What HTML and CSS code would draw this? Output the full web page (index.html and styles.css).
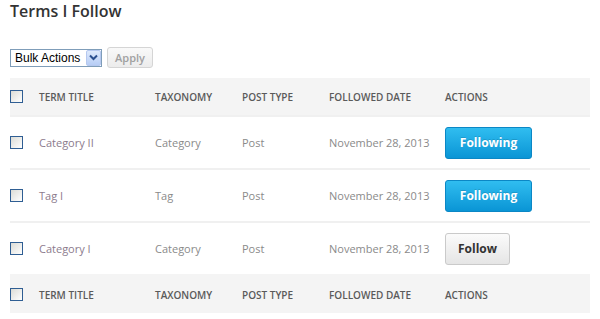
FILE: index.html
```html
<!DOCTYPE html>
<html lang="en">
<head>
    <meta charset="UTF-8">
    <meta name="viewport" content="width=device-width, initial-scale=1.0">
    <title>Terms I Follow</title>
    <link rel="stylesheet" href="styles.css">
</head>
<body>
    <div class="page">
        <h2 class="page-title">Terms I Follow</h2>
        <div class="toolbar">
            <div class="select-wrap">
                <select class="bulk-select">
                    <option>Bulk Actions</option>
                    <option>Unfollow</option>
                </select>
                <span class="select-arrow">
                    <svg width="9" height="7" viewBox="0 0 9 7"><path d="M1 1.5 L4.5 5 L8 1.5" fill="none" stroke="#2a4f8f" stroke-width="2"/></svg>
                </span>
            </div>
            <button type="button" class="btn-apply">Apply</button>
        </div>
        <table class="terms-table">
            <colgroup>
                <col class="col-check">
                <col class="col-title">
                <col class="col-tax">
                <col class="col-type">
                <col class="col-date">
                <col class="col-actions">
            </colgroup>
            <thead>
                <tr>
                    <th><input type="checkbox" class="check"></th>
                    <th>Term Title</th>
                    <th>Taxonomy</th>
                    <th>Post Type</th>
                    <th>Followed Date</th>
                    <th>Actions</th>
                </tr>
            </thead>
            <tbody>
                <tr>
                    <td><input type="checkbox" class="check"></td>
                    <td><a href="#" class="term-link">Category II</a></td>
                    <td>Category</td>
                    <td>Post</td>
                    <td>November 28, 2013</td>
                    <td><button type="button" class="btn btn-following">Following</button></td>
                </tr>
                <tr>
                    <td><input type="checkbox" class="check"></td>
                    <td><a href="#" class="term-link">Tag I</a></td>
                    <td>Tag</td>
                    <td>Post</td>
                    <td>November 28, 2013</td>
                    <td><button type="button" class="btn btn-following">Following</button></td>
                </tr>
                <tr>
                    <td><input type="checkbox" class="check"></td>
                    <td><a href="#" class="term-link">Category I</a></td>
                    <td>Category</td>
                    <td>Post</td>
                    <td>November 28, 2013</td>
                    <td><button type="button" class="btn btn-follow">Follow</button></td>
                </tr>
            </tbody>
            <tfoot>
                <tr>
                    <th><input type="checkbox" class="check"></th>
                    <th>Term Title</th>
                    <th>Taxonomy</th>
                    <th>Post Type</th>
                    <th>Followed Date</th>
                    <th>Actions</th>
                </tr>
            </tfoot>
        </table>
    </div>
</body>
</html>
```

FILE: styles.css
```css
body {
    margin: 0;
    padding: 0;
    background-color: #fff;
    font-family: "Open Sans", "Liberation Sans", sans-serif;
    color: #888;
}
.page {
    padding: 0 10px;
}
.page-title {
    margin: 0;
    font-size: 16px;
    line-height: 22px;
    font-weight: 600;
    color: #333;
}
.toolbar {
    display: flex;
    align-items: center;
    gap: 5px;
    margin-top: 25px;
    height: 21px;
}
.select-wrap {
    position: relative;
    width: 92px;
    height: 18px;
}
.bulk-select {
    appearance: none;
    -webkit-appearance: none;
    display: block;
    width: 92px;
    height: 18px;
    margin: 0;
    padding: 0 0 0 4px;
    border: 1px solid #7f9db9;
    border-radius: 0;
    background: #fff;
    font-family: "Liberation Sans", Arial, sans-serif;
    font-size: 12px;
    line-height: 16px;
    color: #000;
    box-sizing: border-box;
}
.select-arrow {
    position: absolute;
    top: 1px;
    right: 1px;
    width: 15px;
    height: 16px;
    display: flex;
    align-items: center;
    justify-content: center;
    background: linear-gradient(#dde9fc, #b7cdf5);
    border: 1px solid #b5c8ef;
    border-radius: 2px;
    box-sizing: border-box;
    pointer-events: none;
}
.btn-apply {
    height: 21px;
    width: 46px;
    padding: 0;
    border: 1px solid #d5d5d5;
    border-radius: 3px;
    background: linear-gradient(#f9f9f9, #ececec);
    font-family: "Open Sans", sans-serif;
    font-size: 11px;
    font-weight: 600;
    color: #a0a0a0;
}
.terms-table {
    width: 580px;
    margin-top: 10px;
    border-collapse: collapse;
    table-layout: fixed;
}
.col-check { width: 29px; }
.col-title { width: 116px; }
.col-tax { width: 87px; }
.col-type { width: 87px; }
.col-date { width: 116px; }
.col-actions { width: 145px; }
.terms-table th {
    height: 37px;
    padding: 0;
    background-color: #f4f4f4;
    text-align: left;
    font-size: 10px;
    font-weight: 600;
    text-transform: uppercase;
    color: #5a5a5a;
}
.terms-table td {
    height: 51px;
    padding: 0;
    border-top: 2px solid #f0f0f0;
    font-size: 11px;
    color: #8a8a8a;
}
.terms-table tfoot th {
    border-top: 2px solid #f4f4f4;
}
.term-link {
    color: #8c7b8d;
    text-decoration: none;
}
.check {
    appearance: none;
    -webkit-appearance: none;
    display: block;
    width: 13px;
    height: 13px;
    margin: 0;
    border: 1px solid #2f5e93;
    background: linear-gradient(135deg, #dcdcd6, #fff);
    box-sizing: border-box;
}
.btn {
    height: 32px;
    padding: 0;
    border-radius: 3px;
    font-family: "Open Sans", sans-serif;
    font-size: 12px;
    font-weight: 700;
    box-sizing: border-box;
    vertical-align: middle;
}
.btn-following {
    width: 87px;
    border: 1px solid #0b87c5;
    background: linear-gradient(#30bdf0, #0a95d5);
    color: #fff;
    text-shadow: 0 -1px 0 rgba(0, 0, 0, 0.15);
}
.btn-follow {
    width: 65px;
    border: 1px solid #cacaca;
    background: linear-gradient(#fbfbfb, #e5e5e5);
    color: #333;
}
```
